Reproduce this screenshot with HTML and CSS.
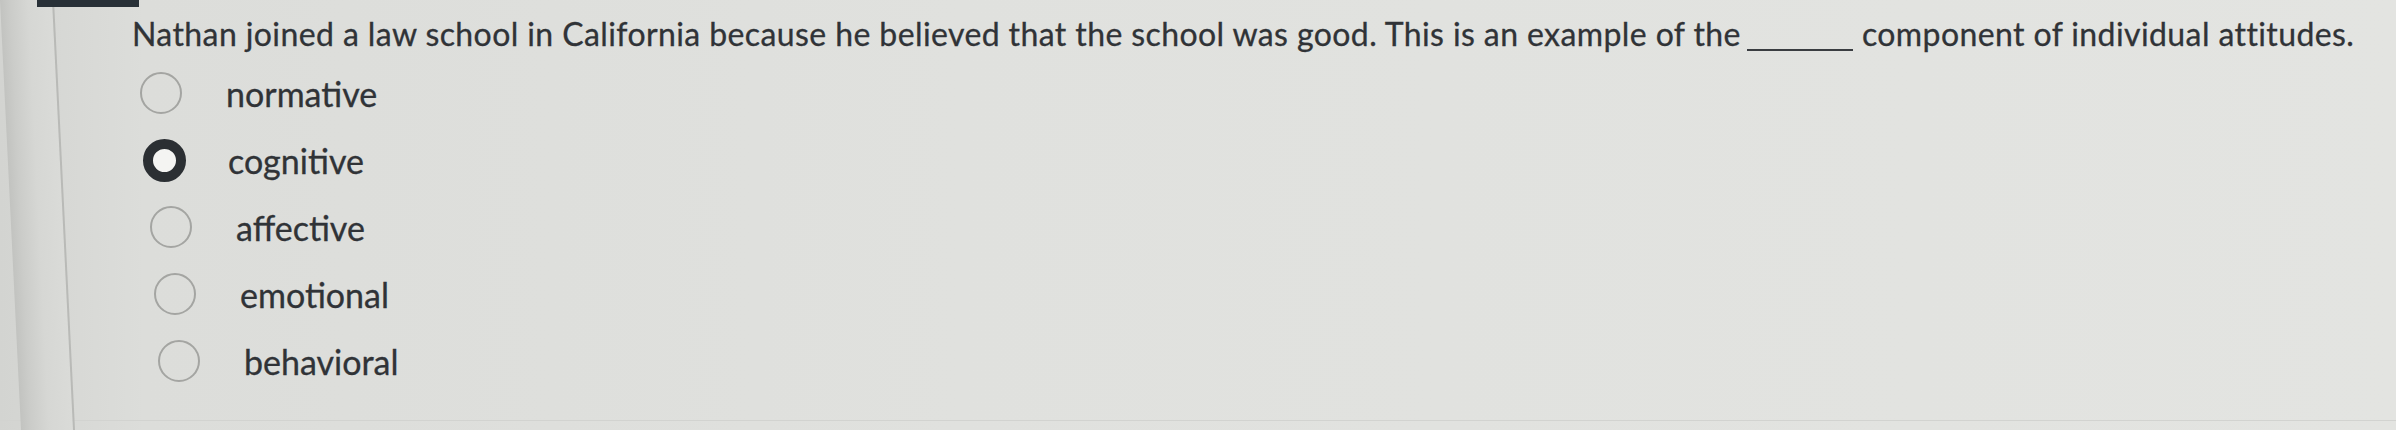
FILE: index.html
```html
<!DOCTYPE html>
<html>
<head>
<meta charset="utf-8">
<link rel="stylesheet" href="styles.css">
</head>
<body>
<div class="page">
  <div class="tab"></div>
  <div class="rail"></div>
  <div class="content">
    <p class="question">Nathan joined a law school in California because he believed that the school was good. This is an example of the<span class="blank" aria-label="blank"></span>component of individual attitudes.</p>
    <ul class="options">
      <li class="option"><span class="radio"></span><span class="label">normative</span></li>
      <li class="option"><span class="radio checked"></span><span class="label">cognitive</span></li>
      <li class="option"><span class="radio"></span><span class="label">affective</span></li>
      <li class="option"><span class="radio"></span><span class="label">emotional</span></li>
      <li class="option"><span class="radio"></span><span class="label">behavioral</span></li>
    </ul>
  </div>
</div>
</body>
</html>
```
FILE: styles.css
```css
html, body {
  margin: 0;
  padding: 0;
}
body {
  width: 2396px;
  height: 430px;
  overflow: hidden;
  background: linear-gradient(90deg, #d3d4d1 0%, #dcddda 6%, #e0e1de 40%, #e3e4e1 100%);
  font-family: Lato, "Open Sans", sans-serif;
  color: #303337;
}
.page {
  position: relative;
  display: flex;
  height: 420px;
  border-bottom: 1px solid #d2d3d0;
}
.tab {
  position: absolute;
  left: 37px;
  top: 0;
  width: 102px;
  height: 7px;
  background: #283037;
  z-index: 2;
}
.rail {
  width: 52px;
  height: 440px;
  flex: none;
  border-right: 2px solid #b9bab7;
  background: linear-gradient(90deg, #c2c3c0 0px, #cbccc9 10px, #d6d7d4 28px, #dadbd8 52px);
  transform: skewX(2.8deg);
  transform-origin: top left;
}
.content {
  flex: 1;
  padding-left: 78px;
}
.question {
  margin: 16px 0 0 0;
  font-size: 32px;
  line-height: 36px;
  white-space: nowrap;
  letter-spacing: 0.4px;
  -webkit-text-stroke: 0.3px #303337;
}
.blank {
  display: inline-block;
  width: 106px;
  height: 10px;
  margin: 0 9px -5px 6px;
  border-bottom: 2px solid #3a3d41;
  vertical-align: baseline;
}
.options {
  list-style: none;
  margin: 21px 0 0 0;
  padding: 0 0 0 8px;
  display: flex;
  flex-direction: column;
  gap: 27px;
}
.option {
  display: flex;
  align-items: center;
  height: 40px;
  gap: 44px;
}
.option:nth-child(2) { padding-left: 3px; }
.option:nth-child(3) { padding-left: 10px; }
.option:nth-child(4) { padding-left: 14px; }
.option:nth-child(5) { padding-left: 18px; }
.radio {
  flex: none;
  width: 38px;
  height: 38px;
  border: 2px solid #a4a5a2;
  border-radius: 50%;
  box-sizing: content-box;
}
.radio.checked {
  width: 23px;
  height: 23px;
  border: 10px solid #2b2f33;
  background: #f4f4f2;
}
.option:nth-child(2) .label {
  margin-left: -2px;
}
.label {
  font-size: 34px;
  line-height: 41px;
  -webkit-text-stroke: 0.3px #303337;
}
```
